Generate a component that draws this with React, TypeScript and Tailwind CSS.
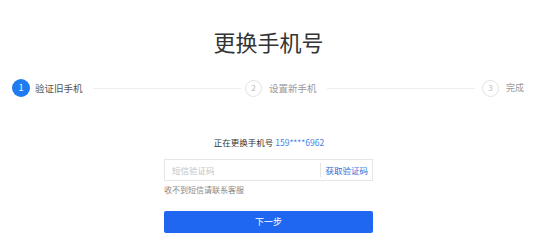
const font = { fontFamily: '"Noto Sans CJK SC", "Noto Sans", sans-serif' }

function StepDot({ n, active }: { n: number; active?: boolean }) {
  return active ? (
    <div className="w-[18px] h-[18px] shrink-0 rounded-full bg-[#1f7bf0] text-white text-[9px] flex items-center justify-center">{n}</div>
  ) : (
    <div className="w-[17px] h-[17px] shrink-0 rounded-full border border-[#e2e2e2] text-[#bbbbbb] text-[8px] flex items-center justify-center">{n}</div>
  )
}

export default function App() {
  return (
    <div className="w-[550px] h-[250px] bg-white overflow-hidden" style={font}>
      <div className="pt-[27px] flex justify-center pr-[13px]">
        <h1 className="text-[22px] leading-[28px] text-[#333333] font-normal">更换手机号</h1>
      </div>

      <div className="mt-[23px] flex items-center pl-[12px] pr-[26px] h-[20px]">
        <StepDot n={1} active />
        <span className="ml-[5px] text-[9.5px] text-[#555555] whitespace-nowrap">验证旧手机</span>
        <div className="flex-1 h-px bg-[#eeeeee] ml-[10px] mr-[4px]" />
        <StepDot n={2} />
        <span className="ml-[7px] text-[9.5px] text-[#9a9a9a] whitespace-nowrap">设置新手机</span>
        <div className="flex-1 h-px bg-[#eeeeee] ml-[10px] mr-[7px]" />
        <StepDot n={3} />
        <span className="ml-[7px] text-[9px] text-[#9a9a9a] whitespace-nowrap">完成</span>
      </div>

      <div className="mt-[38px] flex justify-center pr-[12px]">
        <p className="text-[8.5px] leading-[12px] text-[#333333]">
          正在更换手机号 <span className="text-[#3d86e8]">159****6962</span>
        </p>
      </div>

      <div className="ml-[164px] w-[209px] mt-[11px]">
        <div className="h-[22px] border border-[#e6e6e6] flex items-center">
          <span className="flex-1 pl-[7px] text-[8.5px] text-[#c4c4c4]">短信验证码</span>
          <div className="w-px h-[14px] bg-[#e6e6e6]" />
          <span className="px-[4px] text-[8.5px] text-[#2a6fdb]">获取验证码</span>
        </div>
        <p className="mt-[3px] text-[8px] leading-[12px] text-[#888888]">收不到短信请联系客服</p>
        <button className="mt-[15px] w-full h-[22px] rounded-[2px] bg-[#1f66f0] text-white text-[9px] flex items-center justify-center">下一步</button>
      </div>
    </div>
  )
}
